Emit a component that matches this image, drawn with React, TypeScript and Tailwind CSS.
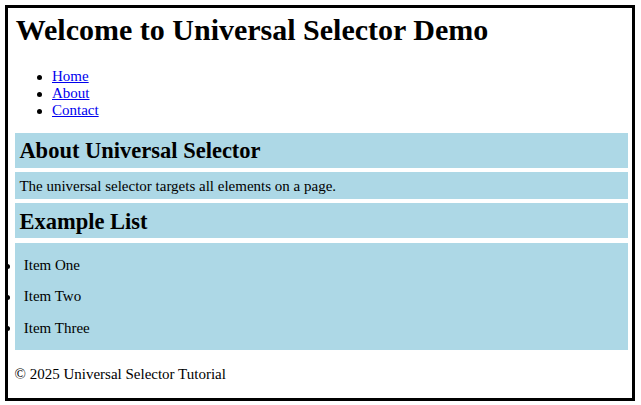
export default function App() {
  const navItems = ["Home", "About", "Contact"];
  const listItems = ["Item One", "Item Two", "Item Three"];
  return (
    <div className="min-h-[405px] w-[641px] bg-white pt-[5px] pl-[5px]">
      <div className="w-[630px] h-[396px] border-[3px] border-black text-black font-['Liberation_Serif','Times_New_Roman',serif] text-[15px] leading-[17px]">
        <h1 className="mt-[4.5px] pl-[7.7px] text-[30px] leading-[34px] font-bold">
          Welcome to Universal Selector Demo
        </h1>
        <nav>
          <ul className="mt-[21.8px] pl-[44px] list-none">
            {navItems.map((t) => (
              <li key={t} className="flex">
                <span className="shrink-0 w-[5px] h-[5px] rounded-full bg-black -ml-[15.2px] mr-[10.2px] mt-[6.7px]" />
                <a href="#" className="text-[#0000ee] underline">
                  {t}
                </a>
              </li>
            ))}
          </ul>
        </nav>
        <section className="mt-[13.4px] ml-[6.7px] mr-[4px] flex flex-col gap-[4.7px]">
          <h2 className="bg-[#add8e6] px-[4.7px] pt-[5.4px] pb-[4px] text-[22.5px] leading-[25.6px] font-bold">
            About Universal Selector
          </h2>
          <p className="bg-[#add8e6] px-[4.7px] pt-[5.4px] pb-[4px]">
            The universal selector targets all elements on a page.
          </p>
          <h2 className="bg-[#add8e6] px-[4.7px] pt-[5.4px] pb-[4px] text-[22.5px] leading-[25.6px] font-bold">
            Example List
          </h2>
          <ul className="bg-[#add8e6] py-[9.4px] flex flex-col gap-[4.7px] list-none">
            {listItems.map((t) => (
              <li key={t} className="flex pt-[4.9px] pb-[4.5px] pl-[9.1px]">
                <span className="shrink-0 w-[5px] h-[5px] rounded-full bg-black -ml-[19px] mr-[14px] mt-[6.8px]" />
                <span>{t}</span>
              </li>
            ))}
          </ul>
        </section>
        <footer className="mt-[15.3px] pl-[6.5px]">
          <p>© 2025 Universal Selector Tutorial</p>
        </footer>
      </div>
    </div>
  );
}
